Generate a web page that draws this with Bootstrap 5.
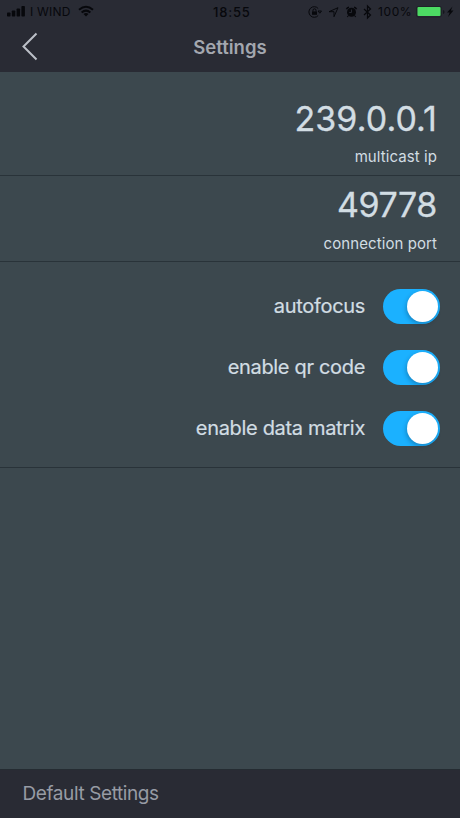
<!DOCTYPE html>
<html lang="en">
<head>
<meta charset="utf-8">
<meta name="viewport" content="width=device-width, initial-scale=1">
<title>Settings</title>
<link href="https://cdn.jsdelivr.net/npm/bootstrap@5.3.0/dist/css/bootstrap.min.css" rel="stylesheet">
<style>
body{font-family:Inter,sans-serif;background:#3c484e;color:#d2dde3;height:818px;overflow:hidden}
.top-area{background:#292b34;height:72px}
.status-line{height:24px;padding:0 5px 0 7px;color:#07080c;font-size:12px;line-height:24px}
.signal{margin-right:-1px}
.carrier{width:42px;letter-spacing:.2px}
.wifi{margin-left:6px}
.clock{font-size:13px;font-weight:500;letter-spacing:.8px;width:60px;margin-left:119px}
.percent{width:35px;letter-spacing:.6px}
.title-line{height:48px;padding-bottom:2px}
.page-title{font-size:18.500px;font-weight:600;color:#a3a7af;line-height:26px}
.back-link{width:60px;height:46px}
.setting{border-bottom:1px solid #293339;padding-right:23px}
.setting-ip{height:104px;padding-top:27px}
.setting-port{height:86px;padding-top:9px}
.big-value{font-size:34px;line-height:40px;-webkit-text-stroke:.3px currentColor}
.value-ip{letter-spacing:.1px}
.value-port{letter-spacing:-.4px}
.caption-text{font-size:15px;line-height:20px;letter-spacing:.08px}
.ip-caption{margin-top:8px}
.port-caption{margin-top:9px}
.switches{height:206px;padding:27px 20px 0 0;border-bottom:1px solid #293339;gap:26px}
.switch-row{height:35px;gap:18px;font-size:20px;line-height:35px;letter-spacing:-.32px;-webkit-text-stroke:.2px currentColor}
.toggle{width:57px;height:35px;background:#1bb1ff;padding:2px}
.knob{width:31px;height:31px;background:#fff;box-shadow:-1px 2px 4px rgba(10,40,70,.3)}
.bottom-bar{height:49px;background:#292b34;border-top:1px solid #252c32;padding-left:22.500px;color:#979ba4;font-size:19px;letter-spacing:-.4px}
</style>
<script src="https://cdn.jsdelivr.net/npm/bootstrap@5.3.0/dist/js/bootstrap.bundle.min.js"></script>
</head>
<body class="d-flex flex-column m-0">
<header class="top-area flex-shrink-0">
  <div class="status-line d-flex align-items-center">
    <svg class="signal" width="24" height="24" viewBox="0 0 24 24" fill="currentColor"><rect x="0" y="12.500" width="3.500" height="4" rx=".8"/><rect x="4.800" y="10.500" width="3.500" height="6" rx=".8"/><rect x="9.600" y="8.500" width="3.500" height="8" rx=".8"/><rect x="14.400" y="6" width="3.500" height="10.500" rx=".8"/></svg>
    <span class="carrier text-nowrap">I WIND</span>
    <svg class="wifi" width="16" height="24" viewBox="0 0 16 24" fill="none" stroke="currentColor" stroke-width="2"><path d="M1 9.800Q8 3.800 15 9.800M3.600 12.500Q8 8.800 12.400 12.500"/><path d="M8 16.500l-2.500-2.500q2.500-2 5 0z" fill="currentColor" stroke="none"/></svg>
    <span class="clock">18:55</span>
    <div class="d-flex align-items-center ms-auto">
      <svg width="70" height="24" viewBox="0 0 70 24" fill="none" stroke="currentColor">
        <path d="M10.200 8.500A5.300 5.300 0 1 0 10.200 15.500M10 11h3.500l-1.700 2.200z"/>
        <rect x="4" y="11.400" width="5" height="3.400" fill="currentColor" stroke="none"/><path d="M5 11.500V10.300a1.500 1.500 0 0 1 3 0v1.200"/>
        <path d="M21 11.700l9-4-4 9v-5z" stroke-linejoin="round"/>
        <circle cx="43.500" cy="12.300" r="4.500" fill="currentColor" stroke="none"/><path d="M38.500 9.300a3 3 0 0 1 2.500-2M48.500 9.300a3 3 0 0 0-2.500-2" stroke-width="1.500"/><path d="M40.500 15.500l-1.200 1.500M46.500 15.500l1.200 1.500" stroke-width="1.100"/><path d="M43.500 9.500v3h-2.300" stroke="#292b34" stroke-width=".9"/>
        <path d="M56 9l6.500 6-3 3V6l3 3-6.500 6" stroke-width="1.200"/>
      </svg>
      <span class="percent">100%</span>
      <svg class="battery-icon" width="42" height="24" viewBox="0 0 42 24"><rect x="3.500" y="6.500" width="25" height="10.500" rx="1.800" fill="none" stroke="#1f2228"/><rect x="4.500" y="7" width="23" height="9" rx="1" fill="#4cdb63"/><path d="M30 10v4q1.600-.5 1.600-2t-1.600-2z" fill="#15171d"/><path d="M39.500 6.500l-5.500 6h2.700L35 17l5.500-6.500h-2.600z" fill="#07080c"/></svg>
    </div>
  </div>
  <div class="title-line d-flex align-items-center">
    <a class="back-link" href="#" aria-label="Back"><svg width="60" height="46" viewBox="0 0 60 46" fill="none" stroke="#bcc0c8" stroke-width="2"><path d="M36.500 9.500L23.500 22.500 36.500 35.500"/></svg></a>
    <div class="flex-fill text-center page-title">Settings</div>
    <span class="back-link"></span>
  </div>
</header>
<main class="flex-grow-1">
  <section class="setting setting-ip text-end">
    <div class="big-value value-ip">239.0.0.1</div>
    <div class="caption-text ip-caption">multicast ip</div>
  </section>
  <section class="setting setting-port text-end">
    <div class="big-value value-port">49778</div>
    <div class="caption-text port-caption">connection port</div>
  </section>
  <section class="switches d-flex flex-column">
    <div class="switch-row d-flex justify-content-end"><span>autofocus</span><span class="toggle rounded-pill d-flex justify-content-end" role="switch" aria-checked="true"><span class="knob rounded-circle"></span></span></div>
    <div class="switch-row d-flex justify-content-end"><span>enable qr code</span><span class="toggle rounded-pill d-flex justify-content-end" role="switch" aria-checked="true"><span class="knob rounded-circle"></span></span></div>
    <div class="switch-row d-flex justify-content-end"><span>enable data matrix</span><span class="toggle rounded-pill d-flex justify-content-end" role="switch" aria-checked="true"><span class="knob rounded-circle"></span></span></div>
  </section>
</main>
<footer class="bottom-bar d-flex align-items-center flex-shrink-0"><span>Default Settings</span></footer>
</body>
</html>
